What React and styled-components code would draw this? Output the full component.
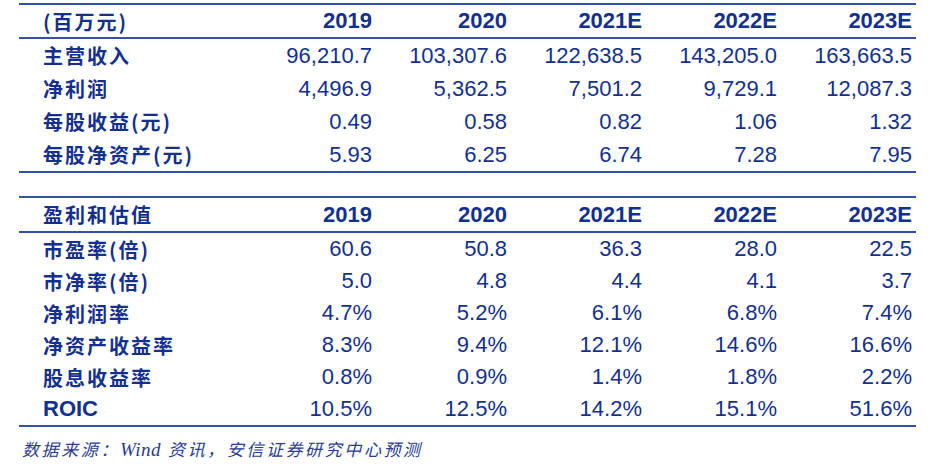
import React from "react";
import styled, { createGlobalStyle } from "styled-components";

const GlobalStyle = createGlobalStyle`
  html, body {
    margin: 0;
    padding: 0;
    background: #ffffff;
  }
`;

const Page = styled.div`
  width: 949px;
  height: 467px;
  padding: 3px 0 0 19px;
  box-sizing: border-box;
  background: #fff;
`;

const Table = styled.div`
  width: 897px;
  display: grid;
  grid-template-columns: 222px repeat(5, 135px);
  border-top: 2px solid #3352a3;
  border-bottom: 2px solid #3352a3;
  margin-bottom: ${(p) => p.$gap || 0}px;
`;

const Row = styled.div`
  display: contents;
`;

const Cell = styled.div`
  height: ${(p) => p.$h}px;
  display: flex;
  align-items: center;
  justify-content: ${(p) => (p.$label ? "flex-start" : "flex-end")};
  padding: ${(p) => (p.$label ? "0 0 0 24px" : "0 4px 0 0")};
  box-sizing: border-box;
  color: #13308e;
  font-family: ${(p) =>
    p.$label
      ? `"Noto Sans CJK SC", "Liberation Sans", sans-serif`
      : `"Liberation Sans", Arial, sans-serif`};
  font-size: ${(p) => (p.$label ? "20px" : "22px")};
  letter-spacing: ${(p) => (p.$label ? "2px" : "0")};
  font-weight: ${(p) => (p.$bold ? 700 : 400)};
  border-bottom: ${(p) => (p.$head ? "2px solid #3352a3" : "none")};
  white-space: nowrap;
`;

const Latin = styled.span`
  font-family: "Liberation Sans", Arial, sans-serif;
  letter-spacing: 0;
  font-size: 22px;
`;

const Footer = styled.div`
  margin: 9px 0 0 3px;
  font-family: "Liberation Serif", "Noto Sans CJK SC", serif;
  font-style: italic;
  font-size: 17px;
  letter-spacing: 2.6px;
  color: #2a3c8f;
`;

const FooterWord = styled.span`
  font-size: 19px;
  letter-spacing: 0.5px;
`;

const finance = {
  head: "(百万元)",
  rows: [
    ["主营收入", "96,210.7", "103,307.6", "122,638.5", "143,205.0", "163,663.5"],
    ["净利润", "4,496.9", "5,362.5", "7,501.2", "9,729.1", "12,087.3"],
    ["每股收益(元)", "0.49", "0.58", "0.82", "1.06", "1.32"],
    ["每股净资产(元)", "5.93", "6.25", "6.74", "7.28", "7.95"],
  ],
};

const valuation = {
  head: "盈利和估值",
  rows: [
    ["市盈率(倍)", "60.6", "50.8", "36.3", "28.0", "22.5"],
    ["市净率(倍)", "5.0", "4.8", "4.4", "4.1", "3.7"],
    ["净利润率", "4.7%", "5.2%", "6.1%", "6.8%", "7.4%"],
    ["净资产收益率", "8.3%", "9.4%", "12.1%", "14.6%", "16.6%"],
    ["股息收益率", "0.8%", "0.9%", "1.4%", "1.8%", "2.2%"],
    ["ROIC", "10.5%", "12.5%", "14.2%", "15.1%", "51.6%"],
  ],
};

const years = ["2019", "2020", "2021E", "2022E", "2023E"];

function Label({ text }) {
  if (/^[A-Z]+$/.test(text)) return <Latin>{text}</Latin>;
  return text;
}

function Section({ data, headH, rowH, gap }) {
  return (
    <Table $gap={gap}>
      <Row>
        <Cell $label $bold $head $h={headH}>{data.head}</Cell>
        {years.map((y) => (
          <Cell key={y} $bold $head $h={headH}>{y}</Cell>
        ))}
      </Row>
      {data.rows.map((r) => (
        <Row key={r[0]}>
          <Cell $label $bold $h={rowH}>
            <Label text={r[0]} />
          </Cell>
          {r.slice(1).map((v, i) => (
            <Cell key={i} $h={rowH}>{v}</Cell>
          ))}
        </Row>
      ))}
    </Table>
  );
}

export default function App() {
  return (
    <>
      <GlobalStyle />
      <Page>
        <Section data={finance} headH={34} rowH={33} gap={23} />
        <Section data={valuation} headH={35} rowH={32} />
        <Footer>
          数据来源：<FooterWord>Wind</FooterWord> 资讯，安信证券研究中心预测
        </Footer>
      </Page>
    </>
  );
}
